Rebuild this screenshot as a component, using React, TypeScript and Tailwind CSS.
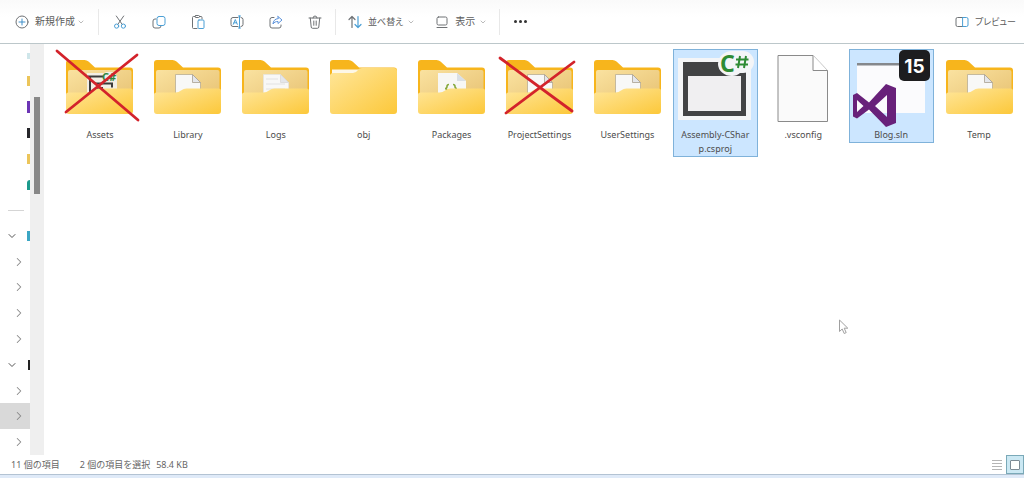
import { useState } from 'react'
import type { ReactNode } from 'react'
import { ChevronDown, ChevronRight } from 'lucide-react'
import clsx from 'clsx'

interface FileItem {
  name: string
  icon: ReactNode
}

const GREY = '#6f7275'
const BLUE = '#4b9fd5'

function ToolIcon({ children }: { children: ReactNode }) {
  return (
    <svg
      className="h-[14px] w-[14px] shrink-0"
      viewBox="0 0 14 14"
      fill="none"
      stroke={GREY}
      strokeLinecap="round"
      strokeLinejoin="round"
      aria-hidden="true"
    >
      {children}
    </svg>
  )
}

function Divider() {
  return <div className="h-[26px] w-px shrink-0 bg-[#e8e8e8]" />
}

const tools = [
  {
    label: '切り取り',
    icon: (
      <ToolIcon>
        <path d="M3.3 1 9.2 9.4M10.7 1 4.8 9.4" />
        <circle cx="3.6" cy="11.1" r="2.1" stroke={BLUE} />
        <circle cx="10.4" cy="11.1" r="2.1" stroke={BLUE} />
      </ToolIcon>
    ),
  },
  {
    label: 'コピー',
    icon: (
      <ToolIcon>
        <path d="M4 4H3a2 2 0 0 0-2 2v5a2 2 0 0 0 2 2h4a2 2 0 0 0 2-2" />
        <rect x="5" y="1.5" width="8" height="9" rx="2" stroke={BLUE} />
      </ToolIcon>
    ),
  },
  {
    label: '貼り付け',
    icon: (
      <ToolIcon>
        <path d="M6 13.5H2.5a1 1 0 0 1-1-1v-10a1 1 0 0 1 1-1H4M8.5 1.5H10a1 1 0 0 1 1 1V4" />
        <rect x="4" y=".5" width="4.5" height="2" rx="1" />
        <rect x="7" y="5" width="6" height="8.5" rx="1" stroke={BLUE} />
      </ToolIcon>
    ),
  },
  {
    label: '名前の変更',
    icon: (
      <ToolIcon>
        <path d="M8 2.5H3a2 2 0 0 0-2 2v5a2 2 0 0 0 2 2h5M11 2.5a2 2 0 0 1 2 2v5a2 2 0 0 1-2 2" />
        <path d="M9.5 1v12M8.5 1h2M8.5 13h2M3.3 9.3 5.3 4.5l2 4.8M4 7.8h2.7" stroke={BLUE} />
      </ToolIcon>
    ),
  },
  {
    label: '共有',
    icon: (
      <ToolIcon>
        <path d="M5 2.5H3a2 2 0 0 0-2 2V11a2 2 0 0 0 2 2h7a2 2 0 0 0 2-2v-1" />
        <path d="M9 1.5 13 5 9 8.5v-2c-2.2 0-3.8.6-5 2.5.2-3 1.8-5.2 5-5.4z" stroke="#5c93dc" />
      </ToolIcon>
    ),
  },
  {
    label: '削除',
    icon: (
      <ToolIcon>
        <path d="M1 3h12M5 3a2 2 0 0 1 4 0M2.3 3l.9 9a1.4 1.4 0 0 0 1.4 1.3h4.8a1.4 1.4 0 0 0 1.4-1.3l.9-9M5.8 6v4.3M8.2 6v4.3" />
      </ToolIcon>
    ),
  },
]

function Toolbar() {
  return (
    <header className="flex h-11 shrink-0 items-center border-b border-[#bcc7ca] bg-linear-to-b from-[#fafafa] to-white to-40% pl-[15px] text-[10px] text-[#5c5c5c]">
      <button className="flex w-[83px] items-center whitespace-nowrap">
        <ToolIcon>
          <circle cx="7" cy="7" r="6" />
          <path d="M7 4v6M4 7h6" stroke="#3f8fc9" />
        </ToolIcon>
        <span className="ml-1.5">新規作成</span>
        <ChevronDown className="ml-0.5 h-2 w-2 text-[#999]" />
      </button>
      <Divider />
      <div className="mr-1 ml-1 flex gap-1.5">
        {tools.map((tool) => (
          <button key={tool.label} aria-label={tool.label} className="flex h-8 w-[33px] items-center justify-center">
            {tool.icon}
          </button>
        ))}
      </div>
      <Divider />
      <button className="ml-3 flex items-center whitespace-nowrap">
        <ToolIcon>
          <path d="M4 12.5v-11M1 4.5l3-3 3 3" strokeWidth="1.200" />
          <path d="M10 1.5v11M7 9.500l3 3 3-3" stroke={BLUE} strokeWidth="1.200" />
        </ToolIcon>
        <span className="ml-1.5 text-[9px] [font-feature-settings:'palt']">並べ替え</span>
        <ChevronDown className="ml-1 h-2 w-2 text-[#999]" />
      </button>
      <button className="ml-5 flex items-center whitespace-nowrap">
        <ToolIcon>
          <rect x="2" y="2" width="10" height="8" rx="1.5" />
          <path d="M2 12.5h10" />
        </ToolIcon>
        <span className="ml-1.5">表示</span>
        <ChevronDown className="ml-1 h-2 w-2 text-[#999]" />
      </button>
      <div className="ml-3">
        <Divider />
      </div>
      <button aria-label="もっと見る" className="ml-3 flex h-8 w-4 items-center justify-center gap-0.5">
        <span className="h-[3px] w-[3px] rounded-full bg-[#333]" />
        <span className="h-[3px] w-[3px] rounded-full bg-[#333]" />
        <span className="h-[3px] w-[3px] rounded-full bg-[#333]" />
      </button>
      <button className="mr-2 ml-auto flex items-center whitespace-nowrap">
        <ToolIcon>
          <path d="M8 2.5H2.5A1.5 1.5 0 0 0 1 4v6a1.5 1.5 0 0 0 1.5 1.5H8" />
          <path d="M8 2.5h3.5A1.5 1.5 0 0 1 13 4v6a1.5 1.5 0 0 1-1.5 1.5H8z" stroke={BLUE} />
        </ToolIcon>
        <span className="ml-1.5 text-[9px] [font-feature-settings:'palt']">プレビュー</span>
      </button>
    </header>
  )
}

const pinned = ['h-1.5 bg-[#cfe6ea]', 'h-2.5 bg-[#ecc55a]', 'h-3 bg-[#6c35b5]', 'h-2.5 bg-[#26262a]', 'h-2.5 bg-[#ecc55a]', 'h-2.5 rounded-tl-full bg-[#1c9a8c]']

const tree = [
  { id: 'pc', open: true, icon: 'h-2.5 w-[3px] bg-[#3ba6c4]' },
  { id: 'pc-1' },
  { id: 'pc-2' },
  { id: 'pc-3' },
  { id: 'pc-4' },
  { id: 'drive', open: true, icon: 'h-2.5 w-0.5 bg-[#222]' },
  { id: 'drive-1' },
  { id: 'drive-2', active: true },
  { id: 'drive-3' },
]

function Sidebar() {
  return (
    <nav className="flex w-[30px] shrink-0 flex-col overflow-hidden">
      <ul>
        {pinned.map((color, i) => (
          <li key={i} className="flex h-[26px] items-center justify-end first:h-6">
            <span className={clsx('w-[3px]', color)} />
          </li>
        ))}
      </ul>
      <hr className="my-3 ml-2 w-4 border-[#d5d5d5]" />
      <ul className="flex flex-1 flex-col">
        {tree.map((node) => (
          <li key={node.id} className={clsx('flex flex-1 items-center', node.active && 'bg-[#d9d9d9]')}>
            <button aria-label={node.id} className={node.open ? 'ml-1.5' : 'ml-3'}>
              {node.open ? (
                <ChevronDown className="h-3 w-3 text-[#555]" />
              ) : (
                <ChevronRight className="h-3.5 w-3.5 text-[#888]" strokeWidth={1.75} />
              )}
            </button>
            {node.icon && <span className={clsx('ml-auto', node.icon)} />}
          </li>
        ))}
      </ul>
    </nav>
  )
}

function Picture({ children }: { children: ReactNode }) {
  return (
    <svg className="h-[78px] w-[83px] overflow-visible" viewBox="0 0 83 78" aria-hidden="true">
      {children}
    </svg>
  )
}

function Folder({ children, closed }: { children?: ReactNode; closed?: boolean }) {
  return (
    <Picture>
      <defs>
        <linearGradient id="front" x1="0" y1="0" x2="1" y2="1">
          <stop offset="0" stopColor="#ffe69a" />
          <stop offset="1" stopColor="#fcc83a" />
        </linearGradient>
        <linearGradient id="inner" x1="0" y1="0" x2="1" y2="1">
          <stop offset="0" stopColor="#fae2a0" />
          <stop offset="1" stopColor="#e6c070" />
        </linearGradient>
      </defs>
      <path d="M8 13a3 3 0 0 1 3-3h15.500a6 6 0 0 1 4 1.500L37 17.500h35a3 3 0 0 1 3 3V60H8z" fill="#f7b51c" />
      {closed ? (
        <>
          <path d="M10 19.500h28l-4 6H10z" fill="#fdf7e6" />
          <path d="M8 25q1-2 3-2h20q3 0 5-3 1-2 4-2h32a3 3 0 0 1 3 3v40a3 3 0 0 1-3 3H11a3 3 0 0 1-3-3z" fill="url(#front)" />
        </>
      ) : (
        <>
          <rect x="10" y="20" width="63.500" height="34" rx="2" fill="url(#inner)" />
          {children}
          <path d="M8 44.500q0-2 2.500-2h19q3 0 5.500-2t5.500-2h32q2.500 0 2.500 2V61a3 3 0 0 1-3 3H11a3 3 0 0 1-3-3z" fill="url(#front)" />
        </>
      )}
    </Picture>
  )
}

function Page({ lined }: { lined?: boolean }) {
  return (
    <>
      <path d="M29.500 24.500h17l8 8V50h-25z" fill="#f8f8f7" stroke={lined ? '#e6e4df' : '#b9ad93'} strokeWidth=".8" />
      <path d="M46.500 24.500v8h8z" fill="#e4e6ea" stroke={lined ? '#d8d8d8' : '#a8a090'} strokeWidth=".8" />
      {lined && <path d="M32 29h12M32 34h19M32 39h19" stroke="#e2e2e2" />}
    </>
  )
}

function Cross({ d }: { d: string }) {
  return <path d={d} stroke="#d3232b" strokeWidth="2.800" strokeLinecap="round" fill="none" />
}

const files: FileItem[] = [
  {
    name: 'Assets',
    icon: (
      <Folder>
        <path d="M29 23h17q4-2 8-1t5 5v15H29z" fill="#f2eee5" />
        <path d="M30 26.500h15M32 26v16M37 33.500h17v4M37 38h8" stroke="#3c3c3c" strokeWidth="2" fill="none" />
        <text x="44" y="31" fontSize="11" fontWeight="700" fill="#2f8640">C#</text>
      </Folder>
    ),
  },
  { name: 'Library', icon: <Folder><Page /></Folder> },
  { name: 'Logs', icon: <Folder><Page lined /></Folder> },
  { name: 'obj', icon: <Folder closed /> },
  {
    name: 'Packages',
    icon: (
      <Folder>
        <path d="M28 23h19l9 8v18H28z" fill="#f7f7f5" />
        <path d="M47 23v8h9z" fill="#d9dfe5" />
        <path d="M39 34.500q-2 0-2 2t-2 2q2 0 2 3M43 34.500q2 0 2 2t2 2q-2 0-2 3" fill="none" stroke="#86a83c" strokeWidth="1.600" />
      </Folder>
    ),
  },
  { name: 'ProjectSettings', icon: <Folder><Page /></Folder> },
  { name: 'UserSettings', icon: <Folder><Page /></Folder> },
  {
    name: 'Assembly-CSharp.csproj',
    icon: (
      <Picture>
        <path d="M4 8h73v62H4z" fill="#f4f5f7" />
        <path d="M9 12h63v54H9z" fill="#424345" />
        <path d="M14 26h53v35H14z" fill="#f0eff1" />
        <path d="M44 14A14 13 0 0 1 58 1h11a11 11 0 0 1 0 22h-3q-3 3-8 3a14 12 0 0 1-14-12z" fill="#f4f5f7" />
        <text x="46" y="22" fontSize="23" fontWeight="700" fill="#2e8b34">C</text>
        <path d="M66 6l-2 12M72 6l-2 12M62 9.500h12.500M61.500 14.500H74" stroke="#2e8b34" strokeWidth="2" />
      </Picture>
    ),
  },
  {
    name: '.vsconfig',
    icon: (
      <Picture>
        <path d="M16 5.500h35l14.500 15v51H16z" fill="#fafafa" stroke="#8a8a8a" />
        <path d="M51 5.500v15h14.500" fill="#fff" stroke="#8a8a8a" />
      </Picture>
    ),
  },
  {
    name: 'Blog.sln',
    icon: (
      <Picture>
        <path d="M7 13h68v50H7z" fill="#fbfbfd" />
        <path d="M7 13h68v2.500H7z" fill="#85888c" />
        <path
          fillRule="evenodd"
          fill="#68217a"
          d="M3 45l4-2 12 9.500L36 34l10 4v35l-10 4L19 59.500 7 68.500l-4-2zM37 45L25 56l12 11zM7 50v12l6.500-6z"
        />
        <rect x="49" y="0" width="31" height="31" rx="5" fill="#1d1d1f" />
        <text x="64.500" y="22.500" fontSize="19" fontWeight="700" textAnchor="middle" fill="#fff" className="font-[Inter,sans-serif]">15</text>
      </Picture>
    ),
  },
  { name: 'Temp', icon: <Folder><Page /></Folder> },
]

// red strokes drawn over these two folders
const crossed: Record<string, string> = {
  Assets: 'M-1 1l81 69M79 5L8 62',
  ProjectSettings: 'M2 8l72 53M76 12L8 63',
}

function FileGrid() {
  const [selected, setSelected] = useState(['Assembly-CSharp.csproj', 'Blog.sln'])

  const toggle = (name: string) =>
    setSelected((list) => (list.includes(name) ? list.filter((n) => n !== name) : [...list, name]))

  return (
    <main className="relative flex-1">
      <ul className="grid grid-cols-[repeat(auto-fill,minmax(86px,1fr))] items-start pt-[5px] pr-px pl-3">
        {files.map((file) => {
          const on = selected.includes(file.name)
          return (
            <li key={file.name} className="flex justify-center">
              <button
                aria-pressed={on}
                onClick={() => toggle(file.name)}
                className={clsx(
                  'relative flex w-[85px] flex-col items-center border',
                  on ? 'border-[#7fb2da] bg-[#cce6ff]' : 'border-transparent',
                )}
              >
                {file.icon}
                <span className="w-full px-1.5 text-center text-[9px] leading-[14px] break-all text-[#4c4c4c]">{file.name}</span>
                {crossed[file.name] && (
                  <span className="absolute top-0 left-0">
                    <Picture><Cross d={crossed[file.name]} /></Picture>
                  </span>
                )}
              </button>
            </li>
          )
        })}
      </ul>
      <svg className="absolute top-[67%] left-[81%] h-4 w-3" viewBox="0 0 12 16" aria-hidden="true">
        <path d="M1.500 1v11.500l2.700-2.500 2 4.500 2-.9-2-4.400h3.600z" fill="#fff" stroke="#a0a0a0" />
      </svg>
    </main>
  )
}

function StatusBar() {
  return (
    <footer className="flex h-[19px] shrink-0 items-center pl-[11px] text-[9px] text-[#666]">
      <span>11 個の項目</span>
      <span className="ml-5">2 個の項目を選択</span>
      <span className="ml-1.5">58.4 KB</span>
      <div className="ml-auto flex h-full items-center">
        <button aria-label="詳細" className="mr-1 flex w-2.5 flex-col gap-0.5">
          <span className="h-px bg-[#b5b5b5]" />
          <span className="h-px bg-[#b5b5b5]" />
          <span className="h-px bg-[#b5b5b5]" />
          <span className="h-px bg-[#b5b5b5]" />
        </button>
        <button aria-label="大アイコン" className="flex h-full w-[18px] items-center justify-center border border-[#7aa9b8] bg-[#cbe8f3]">
          <span className="h-2.5 w-2.5 rounded-[1px] border border-[#7d8b95] bg-white" />
        </button>
      </div>
    </footer>
  )
}

export default function App() {
  return (
    <div className="flex h-screen flex-col bg-white font-['Noto_Sans','Noto_Sans_CJK_JP',sans-serif]">
      <Toolbar />
      <div className="flex min-h-0 flex-1">
        <Sidebar />
        <div className="w-3.5 shrink-0 bg-[#efefef] px-1 pt-[53px]">
          <div className="h-[97px] w-1.5 bg-[#888]" />
        </div>
        <FileGrid />
      </div>
      <StatusBar />
      <div className="h-1 shrink-0 border-t border-[#b3c3d3] bg-[#dfeaf8]" />
    </div>
  )
}
